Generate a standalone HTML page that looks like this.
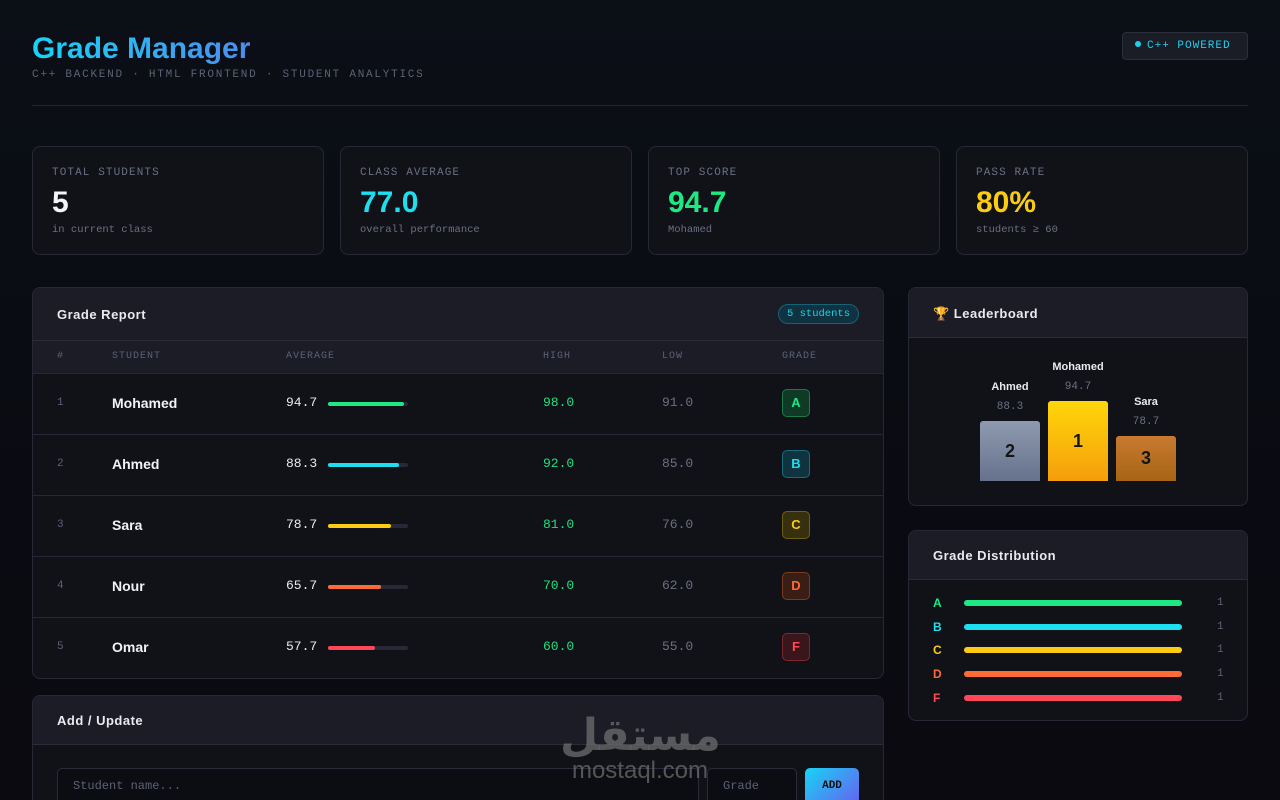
<!DOCTYPE html>
<html><head><meta charset="utf-8"><style>
*{box-sizing:border-box;margin:0;padding:0}
html,body{width:1280px;height:800px;overflow:hidden}
body{background:linear-gradient(180deg,#0b0f16 0%,#0a0b12 60%,#0a0a10 100%);font-family:"Liberation Sans",sans-serif;color:#e8eaf0;position:relative}
.mono{font-family:"Liberation Mono",monospace}
.abs{position:absolute}
h1{position:absolute;left:32px;top:32px;font-size:30px;font-weight:bold;letter-spacing:0;background:linear-gradient(90deg,#19d3f5,#4a8ef0);-webkit-background-clip:text;color:transparent}
.sub{left:32px;top:69px;font-size:11px;letter-spacing:1.75px;color:#5c6175}
.hr{left:32px;top:105px;width:1216px;height:1px;background:#23252f}
.badge{left:1122px;top:32px;width:126px;height:28px;border:1px solid #2b2e3c;border-radius:4px;background:#1a1c26;color:#1fd0ec;font-size:11px;letter-spacing:1px;padding:7px 0 0 12px}
.badge i{display:inline-block;width:6px;height:6px;border-radius:50%;background:#1fd0ec;margin-right:6px;vertical-align:1px}
.card{position:absolute;background:#111218;border:1px solid #262836;border-radius:8px;overflow:hidden}
.stat .l{position:absolute;left:19px;top:20px;font-size:11px;letter-spacing:1.1px;color:#6a6f82}
.stat .v{position:absolute;left:19px;top:39px;font-size:30px;font-weight:bold;letter-spacing:0}
.stat .s{position:absolute;left:19px;top:77px;font-size:10.5px;color:#6a6f82}
.ch{position:absolute;left:0;top:0;right:0;background:#1b1c26;border-bottom:1px solid #2a2c3a}
.ch b{position:absolute;left:24px;font-size:13px;letter-spacing:.5px;color:#e8eaf0}
.th{position:absolute;top:63px;font-size:10px;letter-spacing:1px;color:#5c6175}
.row{position:absolute;left:0;right:0;height:61px;border-top:1px solid #262836}
.row>*{position:absolute;top:0;line-height:58px}
.row .n{left:24px;font-size:11px;color:#5c6175}
.row .nm{left:79px;font-size:14px;font-weight:bold;color:#f0f2f6}
.row .av{left:253px;font-size:13px;color:#e8eaf0}
.row .bar{left:295px;top:28px;width:80px;height:4px;border-radius:2px;background:#272a36;line-height:0}
.row .bar i{display:block;height:4px;border-radius:2px}
.row .hi{left:510px;font-size:13px;color:#1ee07f}
.row .lo{left:629px;font-size:13px;color:#6a6f82}
.row .g{left:749px;top:15px;width:28px;height:28px;border-radius:5px;line-height:26px;text-align:center;font-size:13px;font-weight:bold;border:1px solid}
.pod{position:absolute;width:60px;text-align:center}
.pod .nm{font-size:11px;font-weight:bold;color:#e8eaf0}
.pod .sc{font-size:11px;color:#6a6f82;margin-top:8px}
.pod .b{position:absolute;left:0;width:60px;border-radius:3px 3px 0 0;font-size:18px;font-weight:bold;color:#151515}
.dr{position:absolute;left:24px;width:300px;height:14px;line-height:14px}
.dr b{position:absolute;left:0;top:0;font-size:12px}
.dr i{position:absolute;left:31px;top:4px;width:218px;height:6px;border-radius:3px}
.dr span{position:absolute;left:284px;top:0;font-size:11px;color:#5c6175}
</style></head><body>
<h1>Grade Manager</h1>
<div class="abs mono sub">C++ BACKEND · HTML FRONTEND · STUDENT ANALYTICS</div>
<div class="abs mono badge"><i></i>C++ POWERED</div>
<div class="abs hr"></div>

<div class="card stat" style="left:32px;top:146px;width:292px;height:109px"><div class="l mono">TOTAL STUDENTS</div><div class="v" style="color:#f2f4f8">5</div><div class="s mono">in current class</div></div>
<div class="card stat" style="left:340px;top:146px;width:292px;height:109px"><div class="l mono">CLASS AVERAGE</div><div class="v" style="color:#1ddff0">77.0</div><div class="s mono">overall performance</div></div>
<div class="card stat" style="left:648px;top:146px;width:292px;height:109px"><div class="l mono">TOP SCORE</div><div class="v" style="color:#1ee883">94.7</div><div class="s mono">Mohamed</div></div>
<div class="card stat" style="left:956px;top:146px;width:292px;height:109px"><div class="l mono">PASS RATE</div><div class="v" style="color:#fccc12">80%</div><div class="s mono">students ≥ 60</div></div>

<div class="card" style="left:32px;top:287px;width:852px;height:392px">
 <div class="ch" style="height:53px;background:#1b1c26"><b style="top:19px">Grade Report</b>
  <div class="mono" style="position:absolute;right:24px;top:16px;height:20px;padding:0 8px;border:1px solid #176277;background:#0f3340;border-radius:10px;color:#22cfe8;font-size:10.5px;line-height:18px">5 students</div></div>
 <div style="position:absolute;left:0;right:0;top:53px;height:33px;background:#1b1c26"></div>
 <div class="th mono" style="left:24px">#</div><div class="th mono" style="left:79px">STUDENT</div><div class="th mono" style="left:253px">AVERAGE</div><div class="th mono" style="left:510px">HIGH</div><div class="th mono" style="left:629px">LOW</div><div class="th mono" style="left:749px">GRADE</div>
 <div class="row" style="top:85px"><span class="n mono">1</span><span class="nm">Mohamed</span><span class="av mono">94.7</span><span class="bar"><i style="width:76px;background:#1ee883"></i></span><span class="hi mono">98.0</span><span class="lo mono">91.0</span><span class="g" style="color:#1ee883;border-color:#1a7a4a;background:#0f3a26">A</span></div>
 <div class="row" style="top:146px"><span class="n mono">2</span><span class="nm">Ahmed</span><span class="av mono">88.3</span><span class="bar"><i style="width:71px;background:#1ddff0"></i></span><span class="hi mono">92.0</span><span class="lo mono">85.0</span><span class="g" style="color:#1ddff0;border-color:#176b7d;background:#0f3440">B</span></div>
 <div class="row" style="top:207px"><span class="n mono">3</span><span class="nm">Sara</span><span class="av mono">78.7</span><span class="bar"><i style="width:63px;background:#fccc12"></i></span><span class="hi mono">81.0</span><span class="lo mono">76.0</span><span class="g" style="color:#fccc12;border-color:#6e5d14;background:#36300f">C</span></div>
 <div class="row" style="top:268px"><span class="n mono">4</span><span class="nm">Nour</span><span class="av mono">65.7</span><span class="bar"><i style="width:53px;background:#ff6b35"></i></span><span class="hi mono">70.0</span><span class="lo mono">62.0</span><span class="g" style="color:#ff6b35;border-color:#7a3a22;background:#3a1e16">D</span></div>
 <div class="row" style="top:329px"><span class="n mono">5</span><span class="nm">Omar</span><span class="av mono">57.7</span><span class="bar"><i style="width:47px;background:#ff4757"></i></span><span class="hi mono">60.0</span><span class="lo mono">55.0</span><span class="g" style="color:#ff4757;border-color:#7a2830;background:#3a161c">F</span></div>
</div>

<div class="card" style="left:32px;top:695px;width:852px;height:120px">
 <div class="ch" style="height:49px"><b style="top:17px">Add / Update</b></div>
 <div class="mono" style="position:absolute;left:24px;top:72px;width:642px;height:40px;border:1px solid #2a2c3a;border-radius:5px;background:#0c0d12;color:#5c6175;font-size:12px;padding:10px 15px">Student name...</div>
 <div class="mono" style="position:absolute;left:674px;top:72px;width:90px;height:40px;border:1px solid #2a2c3a;border-radius:5px;background:#0c0d12;color:#5c6175;font-size:12px;padding:10px 15px">Grade</div>
 <div class="mono" style="position:absolute;left:772px;top:72px;width:54px;height:40px;border-radius:5px;background:linear-gradient(135deg,#17d4f4,#6a5cf0);color:#111;font-size:11px;font-weight:bold;text-align:center;line-height:36px">ADD</div>
</div>

<div class="card" style="left:908px;top:287px;width:340px;height:219px">
 <div class="ch" style="height:50px"><b style="top:18px">🏆 Leaderboard</b></div>
 <div class="pod" style="left:71px;top:93px"><div class="nm">Ahmed</div><div class="sc mono">88.3</div></div>
 <div class="pod" style="left:71px;top:133px"><div class="b" style="top:0;height:60px;line-height:60px;background:linear-gradient(#8f9ab0,#66728c)">2</div></div>
 <div class="pod" style="left:139px;top:73px"><div class="nm">Mohamed</div><div class="sc mono">94.7</div></div>
 <div class="pod" style="left:139px;top:113px"><div class="b" style="top:0;height:80px;line-height:80px;background:linear-gradient(#ffd60a,#f59e0b)">1</div></div>
 <div class="pod" style="left:207px;top:108px"><div class="nm">Sara</div><div class="sc mono">78.7</div></div>
 <div class="pod" style="left:207px;top:148px"><div class="b" style="top:0;height:45px;line-height:45px;background:linear-gradient(#c87a30,#a86414)">3</div></div>
</div>

<div class="card" style="left:908px;top:530px;width:340px;height:191px">
 <div class="ch" style="height:49px"><b style="top:17px">Grade Distribution</b></div>
 <div class="dr" style="top:65px"><b style="color:#1ee883">A</b><i style="background:#1ee883"></i><span class="mono">1</span></div>
 <div class="dr" style="top:89px"><b style="color:#1ddff0">B</b><i style="background:#1ddff0"></i><span class="mono">1</span></div>
 <div class="dr" style="top:112px"><b style="color:#fccc12">C</b><i style="background:#fccc12"></i><span class="mono">1</span></div>
 <div class="dr" style="top:136px"><b style="color:#ff6b35">D</b><i style="background:#ff6b35"></i><span class="mono">1</span></div>
 <div class="dr" style="top:160px"><b style="color:#ff4757">F</b><i style="background:#ff4757"></i><span class="mono">1</span></div>
</div>

<div class="abs" style="left:560px;top:708px;width:160px;text-align:center;color:rgba(110,110,110,.75);font-family:'DejaVu Sans',sans-serif;font-weight:bold;font-size:44px;line-height:56px">مستقل</div>
<div class="abs" style="left:555px;top:757px;width:170px;text-align:center;color:rgba(110,110,110,.75);font-size:24px">mostaql.com</div>
</body></html>
